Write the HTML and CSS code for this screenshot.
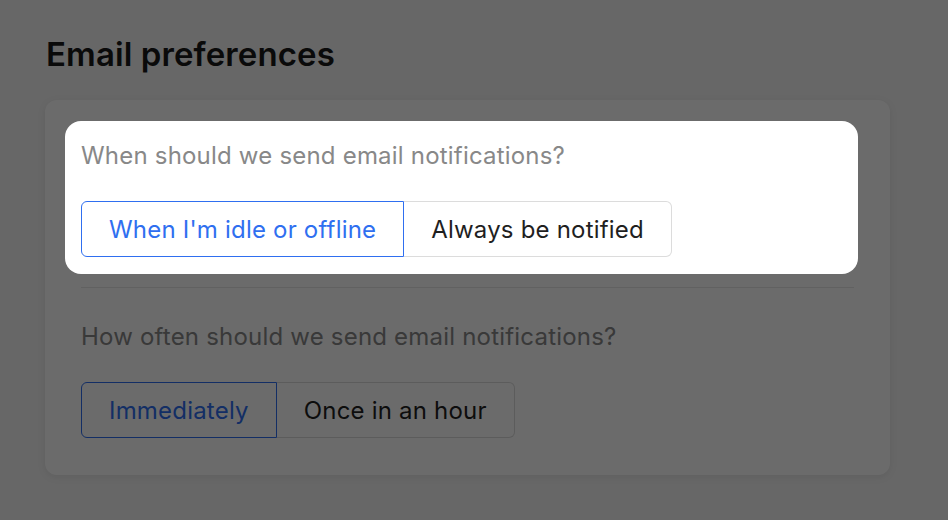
FILE: index.html
```html
<!DOCTYPE html>
<html lang="en">
<head>
<meta charset="utf-8">
<title>Email preferences</title>
<link rel="stylesheet" href="styles.css">
</head>
<body>
<main class="page">
  <h1 class="title">Email preferences</h1>
  <div class="card">
    <section class="section spotlight">
      <p class="question">When should we send email notifications?</p>
      <div class="segmented">
        <button class="seg seg-active">When I'm idle or offline</button>
        <button class="seg">Always be notified</button>
      </div>
    </section>
    <hr class="divider">
    <section class="section">
      <p class="question">How often should we send email notifications?</p>
      <div class="segmented">
        <button class="seg seg-active">Immediately</button>
        <button class="seg">Once in an hour</button>
      </div>
    </section>
  </div>
</main>
</body>
</html>
```
FILE: styles.css
```css
* { box-sizing: border-box; }
html, body { margin: 0; padding: 0; }
body {
  background: #f5f5f5;
  font-family: Inter, "Noto Sans", sans-serif;
  color: #111;
  width: 948px;
  height: 520px;
  overflow: hidden;
}
.page {
  padding: 31px 58px 0 45px;
}
.title {
  margin: 0 0 23px 1px;
  font-size: 33px;
  line-height: 46px;
  font-weight: 600;
  letter-spacing: 0.1px;
  color: #1a1a1a;
}
.card {
  background: #fff;
  border-radius: 12px;
  padding: 37px 36px 37px;
  box-shadow: 0 2px 8px rgba(0,0,0,0.08);
}
.section { display: flex; flex-direction: column; }
.spotlight {
  position: relative;
  z-index: 1;
  margin: -16px -4px -17px -16px;
  padding: 16px 4px 17px 16px;
  background: #fff;
  border-radius: 16px;
  box-shadow: 0 0 0 2000px rgba(0,0,0,0.58);
}
.question {
  margin: 3px 0 29px;
  font-size: 24px;
  line-height: 32px;
  letter-spacing: 0.2px;
  color: #888;
}
.segmented { display: flex; }
.seg {
  height: 56px;
  padding: 0 27px;
  font-family: inherit;
  font-size: 24px;
  letter-spacing: 0.2px;
  color: #1f1f1f;
  background: #fff;
  border: 1px solid #dcdcdc;
  margin: 0;
  cursor: pointer;
}
.seg:first-child { border-radius: 6px 0 0 6px; }
.seg:last-child { border-radius: 0 6px 6px 0; border-left: none; }
.seg-active {
  color: #2f6ff0;
  border-color: #2f6ff0;
}
.divider {
  border: none;
  border-top: 1px solid #e6e6e6;
  margin: 30px 0 30px;
}
```
